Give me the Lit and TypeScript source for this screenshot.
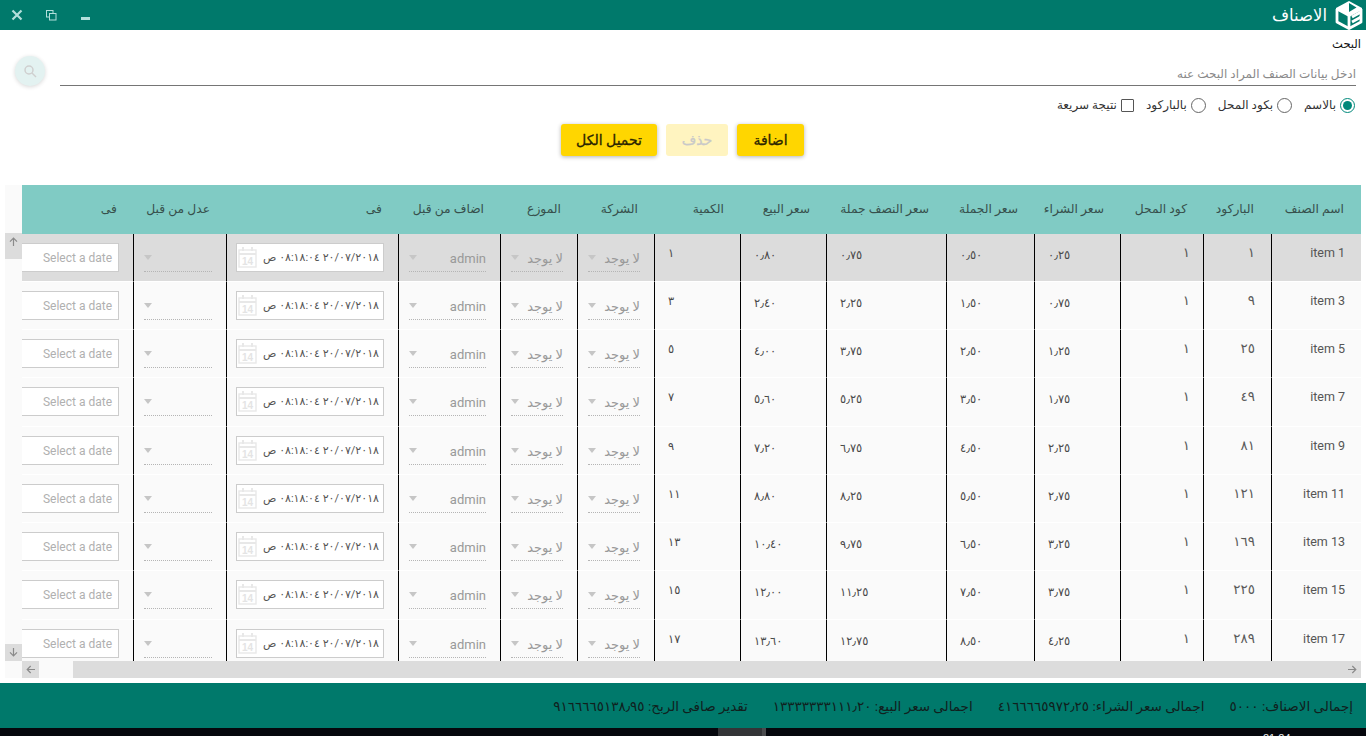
import { LitElement, html, css } from "lit";
import { customElement } from "lit/decorators.js";

const ar = (s: string) => s.replace(/\d/g, (d) => "٠١٢٣٤٥٦٧٨٩"[+d]).replace(/\./g, "٫");
const NS = [1, 3, 5, 7, 9, 11, 13, 15, 17];
const HEADS = ["اسم الصنف", "الباركود", "كود المحل", "سعر الشراء", "سعر الجملة", "سعر النصف جملة", "سعر البيع", "الكمية", "الشركة", "الموزع", "اضاف من قبل", "فى", "عدل من قبل", "فى"];

@customElement("app-root")
export class AppRoot extends LitElement {
  static styles = css`
    :host { display: block; width: 1366px; height: 736px; overflow: hidden; background: #fff; font-family: Roboto, "DejaVu Sans", sans-serif; color: #333; position: relative; }
    .bar { height: 30px; background: #00796b; display: flex; align-items: center; justify-content: space-between; padding: 0 1px 0 10px; }
    .win { display: flex; align-items: center; }
    .win svg { display: block; }
    .win .gap1 { margin-left: 21px; }
    .win .gap2 { margin-left: 24px; }
    .brand { display: flex; align-items: center; gap: 6px; color: #fff; font-size: 16.5px; }
    .search-label { text-align: right; font-size: 11.5px; padding: 7px 5px 0 0; height: 15px; color: #111; line-height: 15px; }
    .search-row { display: flex; align-items: flex-start; padding: 3px 10px 0 15px; height: 44px; box-sizing: border-box; }
    .sbtn { width: 30px; height: 30px; border-radius: 50%; background: #e3f2f1; box-shadow: 0 1px 4px rgba(0,0,0,.16); display: flex; align-items: center; justify-content: center; margin-top: 1px; }
    .sinput { flex: 1; margin-left: 15px; height: 33px; border-bottom: 1px solid #757575; text-align: right; font-size: 12px; line-height: 44px; color: #8a8a8a; direction: rtl; white-space: nowrap; margin-top: -3px; }
    .opts { display: flex; direction: rtl; align-items: center; height: 22px; padding: 0 11px 0 0; font-size: 12px; color: #333; margin-top: -2px; }
    .opt { display: flex; align-items: center; gap: 4px; margin-left: 12px; }
    .radio { width: 13px; height: 13px; border: 1px solid #666; border-radius: 50%; display: flex; align-items: center; justify-content: center; }
    .radio.on { border-color: #00897b; }
    .radio.on i { width: 9px; height: 9px; border-radius: 50%; background: #00897b; display: block; }
    .check { width: 11px; height: 11px; border: 1.5px solid #555; border-radius: 1px; }
    .btns { display: flex; direction: rtl; justify-content: center; gap: 9px; margin-top: 8px; padding-right: 1px; }
    .btn { height: 32px; line-height: 32px; text-align: center; border-radius: 3px; background: #ffd600; color: #2a2400; font-size: 14px; font-weight: 500; -webkit-text-stroke: 0.3px currentColor; box-shadow: 0 1px 4px rgba(0,0,0,.3); }
    .btn.dis { background: #fff4c0; color: #c9c9c9; box-shadow: none; }
    .tablewrap { position: absolute; left: 5px; top: 185px; width: 1356px; height: 493px; display: grid; grid-template-columns: 17px 1fr; grid-template-rows: 476px 17px; background: #fafafa; }
    .vbar { display: flex; flex-direction: column; justify-content: space-between; padding-top: 48px; background: #fafafa; }
    .arrow { width: 17px; height: 17px; background: #dcdcdc; display: flex; align-items: center; justify-content: center; }
    .arrow.tall { height: 26px; align-items: flex-start; padding-top: 4px; box-sizing: border-box; }
    .grid { overflow: hidden; background: #fafafa; }
    .row { display: grid; grid-template-columns: 112px 93px 172px 102px 77px 77px 86px 86px 120px 88px 86px 83px 68px 89px; height: 48.25px; box-sizing: border-box; }
    .row.head { height: 48.5px; background: #80cbc4; grid-template-columns: 95px 93px 172px 102px 77px 77px 86px 86px 119px 89px 86px 83px 67px 90px; padding-right: 17px; }
    .row.sel { background: #dcdcdc; }
    .c { direction: rtl; font-size: 11.5px; color: #4a4a4a; border-right: 1px solid #000; border-bottom: 1px solid #fff; white-space: nowrap; overflow: hidden; box-sizing: border-box; display: flex; align-items: flex-start; }
    .c.price { justify-content: flex-end; padding: 14px 0 0 13px; }
    .c.qty { justify-content: flex-end; padding: 12px 0 0 13px; }
    .c.code { padding: 10px 16px 0 0; font-size: 13.5px; color: #5a5a5a; }
    .c.shop { padding-right: 13px; }
    .c.last { border-right: none; padding: 11px 16px 0 0; font-size: 12.5px; color: #555; }
    .h { direction: rtl; text-align: right; font-size: 12.3px; font-weight: 500; color: #37504c; padding-top: 17px; white-space: nowrap; }
    .c.ctl { padding: 9px 14px 0 10px; }
    .c.dctl { padding: 9px 5px 0 0; }
    .c.pctl { padding: 9px 14px 0 0; }
    .date { box-sizing: border-box; height: 29px; border: 1px solid #ccc; background: #fff; display: flex; align-items: center; flex: none; }
    .date.p { width: 110px; font-size: 12px; color: #b0b0b0; padding: 1px 6px 0; direction: ltr; justify-content: flex-end; }
    .date.v { width: 148px; color: #555; font-size: 11px; gap: 6px; padding: 0 4px; justify-content: flex-start; margin-right: 9px; }
    .sel-f { position: relative; flex: 1; height: 28px; box-sizing: border-box; border-bottom: 1px dotted #b5b5b5; font-size: 13px; color: #999; display: flex; align-items: center; margin-top: 1px; padding-top: 2px; direction: rtl; }
    .sel-f i { position: absolute; left: 0; top: 11px; width: 0; height: 0; border: 4px solid transparent; border-top: 5px solid #c6c6c6; border-bottom: none; }
    .hbar { display: grid; grid-template-columns: 17px 34px 1fr; background: #fafafa; height: 17px; }
    .thumb { background: #dcdcdc; display: flex; align-items: center; justify-content: flex-end; padding-right: 4px; }
    .foot { position: absolute; left: 0; right: 0; top: 683px; height: 45px; background: #00796b; display: flex; direction: rtl; align-items: center; padding-right: 13px; font-size: 13.5px; color: #10201d; gap: 25px; white-space: nowrap; }
    .task { position: absolute; left: 0; right: 0; top: 728px; height: 8px; background: #05070d; overflow: hidden; }
    .task .tb { position: absolute; left: 718px; top: 0; width: 44px; height: 8px; background: #333437; }
    .task .tb2 { position: absolute; left: 762px; top: 0; width: 4px; height: 8px; background: #4a4b4e; }
    .task .clk { position: absolute; left: 1263px; top: 4px; font-size: 11px; line-height: 12px; color: #e8e8e8; font-family: "Liberation Sans", sans-serif; }
  `;

  icon(dir: string) {
    const rot: Record<string, number> = { up: 0, right: 90, down: 180, left: 270 };
    return html`<svg width="9" height="9" viewBox="0 0 9 9"><g transform="rotate(${rot[dir]} 4.5 4.5)" fill="none" stroke="#8a8a8a" stroke-width="1.2"><path d="M4.5 9V1.2M1 4.7l3.5-3.5L8 4.7"/></g></svg>`;
  }

  cal() {
    return html`<svg width="19" height="21" viewBox="0 0 19 21" style="flex:none"><g fill="none" stroke="#e8e8e8" stroke-width="1.4"><rect x="1" y="3" width="17" height="17"/><path d="M1 7h17M5 0v4M14 0v4" stroke-width="2"/></g><text x="9.5" y="17.5" text-anchor="middle" font-size="10" font-family="Liberation Sans" font-weight="700" fill="#e4e4e4">14</text></svg>`;
  }

  rowT(n: number, i: number) {
    const prices = [n * 0.8, n * 0.75, n * 0.5, n * 0.25].map((v) => ar(v.toFixed(2)));
    const date = ar("20/07/2018 08:18:04") + " ص";
    return html`<div class="row body ${i === 0 ? "sel" : ""}">
      <div class="c pctl"><div class="date p">Select a date</div></div>
      <div class="c ctl"><div class="sel-f"><i></i></div></div>
      <div class="c dctl"><div class="date v"><bdi dir="ltr">${date}</bdi>${this.cal()}</div></div>
      <div class="c ctl"><div class="sel-f">admin<i></i></div></div>
      <div class="c ctl"><div class="sel-f">لا يوجد<i></i></div></div>
      <div class="c ctl"><div class="sel-f">لا يوجد<i></i></div></div>
      <div class="c qty">${ar(String(n))}</div>
      ${prices.map((p) => html`<div class="c price">${p}</div>`)}
      <div class="c code shop">${ar("1")}</div>
      <div class="c code">${ar(String(n * n))}</div>
      <div class="c last">item ${n}</div>
    </div>`;
  }

  render() {
    const cols = [...HEADS].reverse();
    return html`
      <div class="bar">
        <div class="win">
          <svg width="14" height="14" viewBox="0 0 14 14"><path d="M2.5 2.5l9 9M11.5 2.5l-9 9" stroke="#b2dfdb" stroke-width="2.2"/></svg>
          <svg class="gap1" width="12" height="12" viewBox="0 0 12 12" fill="none" stroke="#b2dfdb" stroke-width="1"><rect x="1.5" y="1.5" width="6.5" height="6.5"/><rect x="4.5" y="4.5" width="6.5" height="6.5" fill="#00796b"/></svg>
          <svg class="gap2" width="10" height="14" viewBox="0 0 10 14"><rect x="0" y="9" width="9" height="3" fill="#b2dfdb"/></svg>
        </div>
        <div class="brand">
          <span>الاصناف</span>
          <svg width="32" height="30" viewBox="0 0 32 30"><path d="M16 1L3 8v2l13 7 13-7V8z" fill="#fff"/><path d="M16 3l7.5 4.5L16 12z" fill="#00796b"/><g fill="none" stroke="#fff" stroke-width="2.8" stroke-linejoin="round"><path d="M4 9v13l12 6.5 12-6.5V9"/><path d="M16 16v12.5M19 17l9-5M19 22l9-5"/></g></svg>
        </div>
      </div>
      <div class="search-label">البحث</div>
      <div class="search-row">
        <div class="sbtn"><svg width="14" height="14" viewBox="0 0 14 14" fill="none" stroke="#cfcfcf" stroke-width="1.5"><circle cx="6" cy="6" r="4"/><path d="M9 9l4 4"/></svg></div>
        <div class="sinput">ادخل بيانات الصنف المراد البحث عنه</div>
      </div>
      <div class="opts">
        <div class="opt"><span class="radio on"><i></i></span>بالاسم</div>
        <div class="opt"><span class="radio"></span>بكود المحل</div>
        <div class="opt"><span class="radio"></span>بالباركود</div>
        <div class="opt"><span class="check"></span>نتيجة سريعة</div>
      </div>
      <div class="btns">
        <div class="btn" style="width:67px">اضافة</div>
        <div class="btn dis" style="width:62px">حذف</div>
        <div class="btn" style="width:96px">تحميل الكل</div>
      </div>
      <div class="tablewrap">
        <div class="vbar"><div class="arrow tall">${this.icon("up")}</div><div class="arrow">${this.icon("down")}</div></div>
        <div class="grid">
          <div class="row head">${cols.map((h) => html`<div class="h">${h}</div>`)}</div>
          ${NS.map((n, i) => this.rowT(n, i))}
        </div>
        <div></div>
        <div class="hbar"><div class="arrow">${this.icon("left")}</div><div></div><div class="thumb">${this.icon("right")}</div></div>
      </div>
      <div class="foot">
        <span>إجمالى الاصناف: ${ar("5000")}</span>
        <span>اجمالى سعر الشراء: ${ar("4166665972.25")}</span>
        <span>اجمالى سعر البيع: ${ar("13333333111.20")}</span>
        <span>تقدير صافى الربح: ${ar("9166665138.95")}</span>
      </div>
      <div class="task"><div class="tb"></div><div class="tb2"></div><div class="clk">21:24</div></div>
    `;
  }
}
